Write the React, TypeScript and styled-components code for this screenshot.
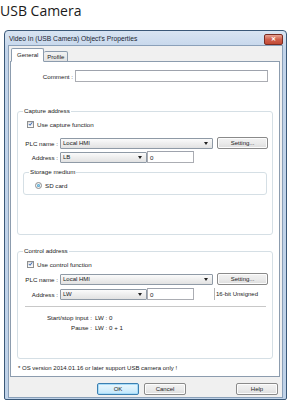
import React from "react";
import styled, { createGlobalStyle } from "styled-components";

const Global = createGlobalStyle`
  html, body { margin: 0; padding: 0; background: #fff; }
  body { font-family: "Liberation Sans", Arial, sans-serif; }
`;

const Page = styled.div`
  width: 293px;
  height: 410px;
  overflow: hidden;
  background: #fff;
`;

const Heading = styled.div`
  font-family: "Open Sans", "Noto Sans", sans-serif;
  font-size: 14px;
  line-height: 20px;
  color: #1a1a1a;
  padding: 1px 0 0 0;
  height: 30px;
  box-sizing: border-box;
`;

const Window = styled.div`
  margin-left: 4px;
  width: 283px;
  height: 370px;
  box-sizing: border-box;
  border: 1px solid #3a5878;
  border-radius: 4px 4px 2px 2px;
  background: linear-gradient(#d8e4f2, #c2d4ea 20px, #bfd2e8);
  padding: 0 3px 1px 3px;
  display: flex;
  flex-direction: column;
`;

const TitleBar = styled.div`
  height: 14px;
  flex-shrink: 0;
  display: flex;
  align-items: center;
  justify-content: space-between;
  padding-left: 1px;
  font-size: 6.7px;
  color: #1b2633;
`;

const CloseBtn = styled.div`
  width: 17px;
  height: 9px;
  border: 1px solid #7a2c22;
  border-radius: 2px;
  background: linear-gradient(#e8a393, #d0604c 50%, #c24a35);
  display: flex;
  align-items: center;
  justify-content: center;
  color: #fff;
  font-size: 6px;
  font-weight: bold;
  line-height: 1;
  margin-top: 2px;
`;

const Client = styled.div`
  flex: 1;
  border: 1px solid #8aa0b9;
  background: #f0f0f0;
  padding: 0 2px 0 1px;
  display: flex;
  flex-direction: column;
`;

const Tabs = styled.div`
  display: flex;
  align-items: flex-end;
  height: 16px;
  flex-shrink: 0;
  padding-left: 1px;
  margin-bottom: -1px;
  position: relative;
  z-index: 1;
`;

const Tab = styled.div<{ $active?: boolean }>`
  height: ${(p) => (p.$active ? "14px" : "11px")};
  padding: 0 ${(p) => (p.$active ? "5px" : "3px")};
  box-sizing: border-box;
  border: 1px solid #8c9cae;
  border-bottom: ${(p) => (p.$active ? "1px solid #fff" : "1px solid #8c9cae")};
  border-left: ${(p) => (p.$active ? "1px solid #8c9cae" : "none")};
  border-radius: 2px 2px 0 0;
  background: ${(p) => (p.$active ? "#fff" : "linear-gradient(#f2f2f2, #e3e3e3)")};
  font-size: 6px;
  display: flex;
  align-items: center;
  color: #1a1a1a;
`;

const Panel = styled.div`
  height: 316px;
  flex-shrink: 0;
  box-sizing: border-box;
  border: 1px solid #8c9cae;
  background: #fff;
  padding: 8px 6px 0 6px;
  display: flex;
  flex-direction: column;
`;

const Row = styled.div<{ $h?: number; $mt?: number }>`
  display: flex;
  align-items: center;
  flex-shrink: 0;
  height: ${(p) => p.$h ?? 12}px;
  margin-top: ${(p) => p.$mt ?? 0}px;
`;

const Label = styled.div<{ $w: number }>`
  width: ${(p) => p.$w}px;
  flex-shrink: 0;
  text-align: right;
  font-size: 6.2px;
  color: #1a1a1a;
  padding-right: 2px;
  box-sizing: border-box;
  white-space: nowrap;
`;

const Text = styled.div<{ $ml?: number }>`
  display: flex;
  align-items: center;
  font-size: 6.2px;
  color: #1a1a1a;
  white-space: nowrap;
  margin-left: ${(p) => p.$ml ?? 0}px;
`;

const TextBox = styled.div<{ $w: number; $h?: number }>`
  width: ${(p) => p.$w}px;
  height: ${(p) => p.$h ?? 12}px;
  flex-shrink: 0;
  box-sizing: border-box;
  border: 1px solid #abadb3;
  border-top-color: #9ea3ad;
  background: #fff;
  font-size: 6.2px;
  display: flex;
  align-items: center;
  padding-left: 2px;
  color: #1a1a1a;
`;

const Select = styled.div<{ $w: number }>`
  width: ${(p) => p.$w}px;
  height: 11px;
  flex-shrink: 0;
  box-sizing: border-box;
  border: 1px solid #8f9aa6;
  border-radius: 1px;
  background: linear-gradient(#fbfbfb, #eeeeee 50%, #e2e2e2);
  font-size: 6px;
  display: flex;
  align-items: center;
  justify-content: space-between;
  padding: 0 4px 0 2px;
  color: #1a1a1a;
`;

const Arrow = styled.span`
  width: 0;
  height: 0;
  border-left: 2.5px solid transparent;
  border-right: 2.5px solid transparent;
  border-top: 3px solid #222;
`;

const Button = styled.div<{ $w: number; $default?: boolean; $ml?: number }>`
  width: ${(p) => p.$w}px;
  height: 12px;
  flex-shrink: 0;
  margin-left: ${(p) => p.$ml ?? 0}px;
  box-sizing: border-box;
  border: 1px solid ${(p) => (p.$default ? "#3c7fb1" : "#8a8a8a")};
  border-radius: 2px;
  background: ${(p) =>
    p.$default
      ? "linear-gradient(#eaf6fd, #d9f0fc 50%, #bee6fd)"
      : "linear-gradient(#f2f2f2, #ebebeb 50%, #dddddd)"};
  box-shadow: inset 0 0 0 1px ${(p) => (p.$default ? "#a8dcf8" : "#fcfcfc")};
  font-size: 6px;
  display: flex;
  align-items: center;
  justify-content: center;
  color: #1a1a1a;
`;

const Group = styled.fieldset<{ $h: number; $mt?: number }>`
  margin: ${(p) => p.$mt ?? 0}px 0 0 0;
  padding: 0 5px 0 5px;
  height: ${(p) => p.$h}px;
  flex-shrink: 0;
  box-sizing: border-box;
  border: 1px solid #d5dfe5;
  border-radius: 3px;
  display: flex;
  flex-direction: column;
  min-width: 0;
`;

const Legend = styled.legend`
  font-size: 6.2px;
  color: #1a1a1a;
  padding: 0 1px;
  margin-left: 0;
  line-height: 8px;
`;

const CheckBox = styled.span`
  width: 7px;
  height: 7px;
  box-sizing: border-box;
  border: 1px solid #8e8f8f;
  background: linear-gradient(#dcdcdc, #fff);
  display: inline-flex;
  align-items: center;
  justify-content: center;
  margin-right: 3px;
`;

const Radio = styled.span`
  width: 7px;
  height: 7px;
  box-sizing: border-box;
  border: 1px solid #8e8f8f;
  border-radius: 50%;
  background: #f4f4f4;
  display: inline-flex;
  align-items: center;
  justify-content: center;
  margin-right: 3px;
  &::after {
    content: "";
    width: 3px;
    height: 3px;
    border-radius: 50%;
    background: radial-gradient(#8fd3f0, #2a7fb4);
  }
`;

const Check = () => (
  <svg width="6" height="6" viewBox="0 0 6 6">
    <path d="M1 3 L2.5 4.6 L5 1" stroke="#3a6bb8" strokeWidth="1.2" fill="none" />
  </svg>
);

const Unit = styled.div`
  margin-left: 20px;
  flex-shrink: 0;
  height: 12px;
  border-left: 1px solid #b5b5b5;
  padding-left: 1px;
  font-size: 6px;
  display: flex;
  align-items: center;
  color: #1a1a1a;
  white-space: nowrap;
`;

const Separator = styled.div`
  height: 1px;
  flex-shrink: 0;
  background: #c8c8c8;
  border-bottom: 1px solid #fff;
  margin: 6px 1px 0 2px;
`;

const Footnote = styled.div`
  font-size: 6px;
  line-height: 7px;
  color: #1a1a1a;
  margin-top: 6px;
  padding-left: 1px;
`;

const ButtonBar = styled.div`
  display: flex;
  align-items: flex-start;
  padding: 6px 2px 0 87px;
  gap: 5px;
`;

const Spacer = styled.div`
  flex: 1;
`;

export default function App() {
  return (
    <Page>
      <Global />
      <Heading>USB Camera</Heading>
      <Window>
        <TitleBar>
          <span>Video In (USB Camera) Object's Properties</span>
          <CloseBtn>✕</CloseBtn>
        </TitleBar>
        <Client>
          <Tabs>
            <Tab $active>General</Tab>
            <Tab>Profile</Tab>
          </Tabs>
          <Panel>
            <Row $h={12}>
              <Label $w={58}>Comment :</Label>
              <TextBox $w={193} $h={12} />
            </Row>
            <Group $h={128} $mt={25}>
              <Legend>Capture address</Legend>
              <Row $h={10} $mt={4}>
                <Text $ml={4}>
                  <CheckBox>
                    <Check />
                  </CheckBox>
                  Use capture function
                </Text>
              </Row>
              <Row $h={12} $mt={8}>
                <Label $w={37}>PLC name :</Label>
                <Select $w={153}>
                  Local HMI
                  <Arrow />
                </Select>
                <Button $w={51} $ml={4}>Setting...</Button>
              </Row>
              <Row $h={12} $mt={2}>
                <Label $w={37}>Address :</Label>
                <Select $w={87}>
                  LB
                  <Arrow />
                </Select>
                <TextBox $w={47}>0</TextBox>
              </Row>
              <Group $h={27} $mt={5}>
                <Legend>Storage medium</Legend>
                <Row $h={10} $mt={4}>
                  <Text $ml={6}>
                    <Radio />
                    SD card
                  </Text>
                </Row>
              </Group>
            </Group>
            <Group $h={112} $mt={12}>
              <Legend>Control address</Legend>
              <Row $h={10} $mt={4}>
                <Text $ml={4}>
                  <CheckBox>
                    <Check />
                  </CheckBox>
                  Use control function
                </Text>
              </Row>
              <Row $h={12} $mt={4}>
                <Label $w={37}>PLC name :</Label>
                <Select $w={153}>
                  Local HMI
                  <Arrow />
                </Select>
                <Button $w={51} $ml={4}>Setting...</Button>
              </Row>
              <Row $h={12} $mt={3}>
                <Label $w={37}>Address :</Label>
                <Select $w={87}>
                  LW
                  <Arrow />
                </Select>
                <TextBox $w={47}>0</TextBox>
                <Unit>16-bit Unsigned</Unit>
              </Row>
              <Separator />
              <Row $h={10} $mt={4}>
                <Label $w={71}>Start/stop input :</Label>
                <Text $ml={1}>LW : 0</Text>
              </Row>
              <Row $h={10}>
                <Label $w={71}>Pause :</Label>
                <Text $ml={1}>LW : 0 + 1</Text>
              </Row>
            </Group>
            <Footnote>* OS version 2014.01.16 or later support USB camera only !</Footnote>
          </Panel>
          <ButtonBar>
            <Button $w={42} $default>OK</Button>
            <Button $w={42}>Cancel</Button>
            <Spacer />
            <Button $w={42}>Help</Button>
          </ButtonBar>
        </Client>
      </Window>
    </Page>
  );
}
